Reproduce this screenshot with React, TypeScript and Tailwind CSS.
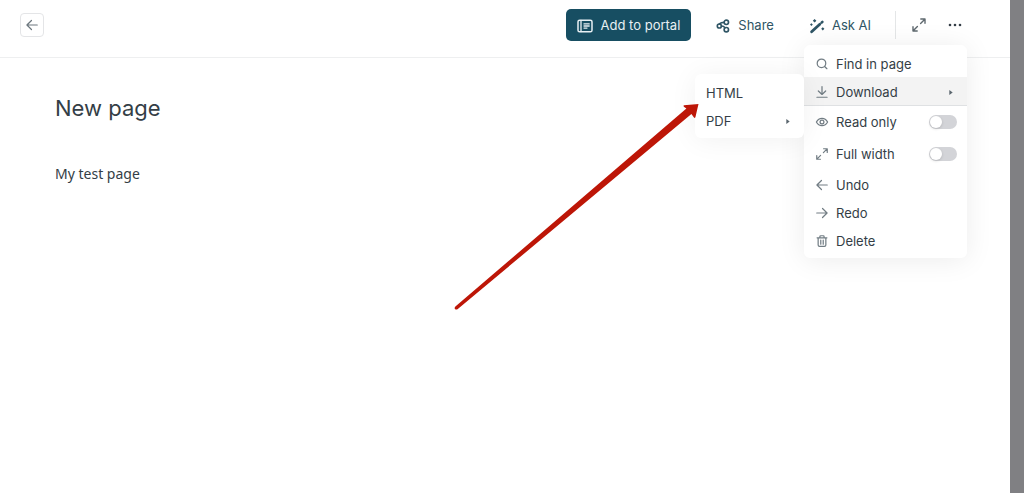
import type { ReactNode } from "react";

type IconProps = { className?: string; children: ReactNode };

function Icon({ className = "size-3.5", children }: IconProps) {
  return (
    <svg
      viewBox="0 0 16 16"
      className={`shrink-0 ${className}`}
      fill="none"
      stroke="currentColor"
      strokeWidth="1.4"
      strokeLinecap="round"
      strokeLinejoin="round"
      aria-hidden="true"
    >
      {children}
    </svg>
  );
}

const ArrowLeftIcon = () => (
  <Icon>
    <path d="M14 8H2.4M7.4 2.8 2.2 8l5.2 5.2" />
  </Icon>
);

const ArrowRightIcon = () => (
  <Icon>
    <path d="M2 8h11.6M8.6 2.8 13.8 8l-5.2 5.2" />
  </Icon>
);

const ExpandIcon = ({ className }: { className?: string }) => (
  <Icon className={className}>
    <path d="M9.8 2h4.2v4.2M13.8 2.2 9.6 6.4M6.2 14H2V9.8M2.2 13.8l4.2-4.2" />
  </Icon>
);

const PortalIcon = () => (
  <Icon className="size-4">
    <rect x="1" y="2.2" width="14" height="11.6" rx="1.6" strokeWidth="1.5" />
    <path d="M4 2.4v11.2M7 5.9h5.2M7 8h5.2M7 10.1h3" strokeWidth="1.3" />
  </Icon>
);

const ShareIcon = () => (
  <Icon>
    <g strokeWidth="1.9">
      <circle cx="3.8" cy="8" r="2.3" />
      <circle cx="11.8" cy="3.8" r="2.5" />
      <circle cx="11.8" cy="12.2" r="2.5" />
      <path d="M4 5.6Q5.8 3.8 9.2 3.8M6.2 8q2.8 0 4 2" />
    </g>
  </Icon>
);

const WandIcon = () => (
  <Icon className="size-4">
    <path d="m2.6 13.8 8.2-7.6" strokeWidth="2.8" />
    <path d="m12.6 4.6.8-.8" strokeWidth="2.6" />
    <g fill="currentColor" stroke="none">
      <path d="M5.6 1 7.4 2.8 5.6 4.6 3.8 2.8zM2.4 5.2l1.4 1.4L2.4 8 1 6.6zM13.8 9.2l1.6 1.6-1.6 1.6-1.6-1.6z" />
    </g>
  </Icon>
);

const SearchIcon = () => (
  <Icon>
    <circle cx="7.4" cy="7.2" r="4.9" />
    <path d="m11 10.8 2.6 2.6" />
  </Icon>
);

const DownloadIcon = () => (
  <Icon>
    <path d="M8 1.8v8.8M3.8 6.8 8 10.8l4.2-4M2.2 14h11.6" />
  </Icon>
);

const EyeIcon = () => (
  <Icon>
    <path d="M1.6 8C3.2 5 5.4 3.8 8 3.8S12.8 5 14.4 8c-1.6 3-3.8 4.2-6.4 4.2S3.2 11 1.6 8Z" />
    <circle cx="8" cy="8" r="2.2" />
  </Icon>
);

const TrashIcon = () => (
  <Icon>
    <path d="M2.4 4.4h11.2M3.6 4.4v8.2q0 1.6 1.6 1.6h5.6q1.6 0 1.6-1.6V4.4M5.6 4.2V3q0-1 1-1h2.8q1 0 1 1v1.2M6.6 7v4.6M9.4 7v4.6" />
  </Icon>
);

const Caret = () => (
  <svg viewBox="0 0 4 6" className="ml-auto h-[5px] w-1 shrink-0 fill-[#5b666e]" aria-hidden="true">
    <path d="M0 0v6l4-3z" />
  </svg>
);

const itemClass = "flex h-7 w-full items-center pt-0.5 pl-[11px] pr-[14px] text-left";

function ItemIcon({ children }: { children: ReactNode }) {
  return <span className="mr-[7px] text-[#727d84]">{children}</span>;
}

function MenuButton({ icon, label }: { icon: ReactNode; label: string }) {
  return (
    <button type="button" role="menuitem" className={`${itemClass} hover:bg-[#f3f3f3]`}>
      <ItemIcon>{icon}</ItemIcon>
      {label}
    </button>
  );
}

function MenuToggle({ icon, label }: { icon: ReactNode; label: string }) {
  return (
    <label className="flex h-8 cursor-pointer items-center pr-[10px] pl-[11px]">
      <ItemIcon>{icon}</ItemIcon>
      {label}
      <input
        type="checkbox"
        className="ml-auto flex h-[14px] w-7 cursor-pointer appearance-none items-center rounded-full bg-[#d3d4d8] px-px before:size-3 before:rounded-full before:bg-white before:shadow-[0_1px_3px_rgba(0,0,0,0.15)] checked:bg-[#1a4f63] checked:before:ml-auto"
      />
    </label>
  );
}

function PointerArrow() {
  return (
    <svg
      viewBox="0 0 246 208"
      className="pointer-events-none absolute top-[29px] right-full -mr-1 h-[208px] w-[246px] fill-[#bd1607]"
      aria-hidden="true"
    >
      <path d="M245.5 1 231 2.2q-1 .8.2 1.8l2.2 1.6L2.4 203.6q-1.4 1.6-.2 2.6 1.2.8 2.6-.2L238.4 11l2.6 3.6q.6 1 1.4-.4z" />
    </svg>
  );
}

function DownloadMenu() {
  return (
    <div
      role="menu"
      aria-label="Download"
      className="absolute -top-[3px] right-full w-[109px] rounded-md bg-white py-1 shadow-[0_2px_28px_rgba(0,0,0,0.06)]"
    >
      <button type="button" role="menuitem" className={itemClass}>
        HTML
      </button>
      <button type="button" role="menuitem" className={itemClass}>
        PDF
        <Caret />
      </button>
      <PointerArrow />
    </div>
  );
}

function PageMenu() {
  return (
    <div
      role="menu"
      aria-label="Page actions"
      className="absolute top-full right-0 mt-2 w-[163px] rounded-md bg-white py-1 text-[13px] leading-5 text-[#343e46] shadow-[0_2px_28px_rgba(0,0,0,0.08)]"
    >
      <MenuButton icon={<SearchIcon />} label="Find in page" />
      <div className="relative border-b border-[#dfe1e3]">
        <button
          type="button"
          role="menuitem"
          aria-haspopup="menu"
          aria-expanded="true"
          className={`${itemClass} bg-[#f3f3f3]`}
        >
          <ItemIcon>
            <DownloadIcon />
          </ItemIcon>
          Download
          <Caret />
        </button>
        <DownloadMenu />
      </div>
      <MenuToggle icon={<EyeIcon />} label="Read only" />
      <MenuToggle icon={<ExpandIcon />} label="Full width" />
      <MenuButton icon={<ArrowLeftIcon />} label="Undo" />
      <MenuButton icon={<ArrowRightIcon />} label="Redo" />
      <MenuButton icon={<TrashIcon />} label="Delete" />
    </div>
  );
}

function Header() {
  return (
    <header className="flex h-[58px] items-start justify-between border-b border-[#eeeff0] pt-[9px] pr-[43px] pl-5 text-[13px]">
      <button
        type="button"
        aria-label="Back"
        className="mt-1 flex size-6 items-center justify-center rounded border border-[#e4e5e7] text-[#6c777e]"
      >
        <ArrowLeftIcon />
      </button>
      <div className="flex h-8 items-center text-[#2f5565]">
        <button
          type="button"
          className="mr-[25px] flex h-8 items-center gap-2 rounded-[5px] bg-[#174e62] px-[11px] pt-0.5 text-[#e9f0f3]"
        >
          <PortalIcon />
          Add to portal
        </button>
        <button type="button" className="mr-[35px] flex h-8 items-center gap-2 pt-0.5">
          <ShareIcon />
          Share
        </button>
        <button type="button" className="mr-6 flex h-8 items-center gap-[7px] pt-0.5">
          <WandIcon />
          Ask AI
        </button>
        <div className="mr-[11px] h-7 w-px bg-[#e4e6e7]" />
        <button
          type="button"
          aria-label="Full screen"
          className="mr-3 flex size-6 items-center justify-center text-[#5f696f]"
        >
          <ExpandIcon className="size-4" />
        </button>
        <div className="relative">
          <button
            type="button"
            aria-label="More actions"
            aria-haspopup="menu"
            aria-expanded="true"
            className="flex size-6 items-center justify-center text-[#343e46]"
          >
            <svg viewBox="0 0 16 16" className="size-4 fill-current" aria-hidden="true">
              <circle cx="3" cy="8" r="1.3" />
              <circle cx="8" cy="8" r="1.3" />
              <circle cx="13" cy="8" r="1.3" />
            </svg>
          </button>
          <PageMenu />
        </div>
      </div>
    </header>
  );
}

export default function App() {
  return (
    <div className="flex min-h-screen bg-[#808083] pr-[14px] font-['Inter',sans-serif]">
      <div className="min-w-0 flex-1 bg-white">
        <Header />
        <main className="px-[55px] pt-[34px] text-[#343e46]">
          <h1 className="text-[22px] leading-8">New page</h1>
          <p className="mt-10 font-['Noto_Sans',sans-serif] text-[14px] leading-5">My test page</p>
        </main>
      </div>
    </div>
  );
}
